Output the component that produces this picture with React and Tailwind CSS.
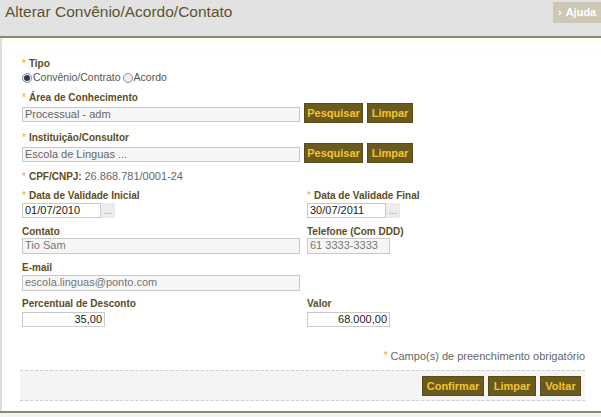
import React from "react";

const Star = () => <span className="text-[#e5a93a] font-normal mr-[3px] text-[10px] align-top">*</span>;

function Label({ children, req, className = "" }) {
  return (
    <div className={"text-[10px] leading-[13px] font-bold text-[#5c4d1e] " + className}>
      {req && <Star />}
      {children}
    </div>
  );
}

function Btn({ children, w }) {
  return (
    <div
      className={"h-[20px] bg-[#6b5a1e] border border-[#5a4a14] text-[#f2c42a] text-[11px] font-bold leading-[18px] text-center " + w}
    >
      {children}
    </div>
  );
}

function Field({ children, className = "" }) {
  return (
    <div className={"h-[15px] border border-[#c9c9c9] text-[11px] leading-[13px] px-[2px] overflow-hidden whitespace-nowrap " + className}>
      {children}
    </div>
  );
}

function Radio({ checked }) {
  return (
    <span className="inline-flex w-[10px] h-[10px] rounded-full border border-[#8a8f99] bg-[#f0f0f0] items-center justify-center mr-[1px]">
      {checked && <span className="w-[6px] h-[6px] rounded-full bg-[#2c3a55]" />}
    </span>
  );
}

export default function App() {
  return (
    <div className="w-[601px] h-[417px] bg-white flex flex-col overflow-hidden" style={{ fontFamily: '"Liberation Sans", Arial, sans-serif' }}>
      <div className="h-[36px] bg-[#e2e2e2] flex justify-between items-start shrink-0">
        <div className="pl-[5px] pt-[3px] text-[15.5px] leading-[18px] text-[#5f5233]">Alterar Convênio/Acordo/Contato</div>
        <div className="mt-[2px] h-[21px] w-[48px] bg-[#cdc8b3] text-white text-[11px] font-bold leading-[21px] pl-[5px]">
          <span className="mr-[4px]">›</span>Ajuda
        </div>
      </div>
      <div className="h-[2px] bg-[#8b8a6a] shrink-0" />
      <div className="flex-1 border-l-2 border-[#dedede] flex flex-col pl-[20px] pt-[19px] bg-gradient-to-b from-[#fffef3] via-white to-white via-[4%]">
        <Label req>Tipo</Label>
        <div className="flex items-center text-[10.5px] leading-[13px] text-[#555] mt-[1px]">
          <Radio checked />
          <span>Convênio/Contrato</span>
          <span className="w-[2px]" />
          <Radio />
          <span>Acordo</span>
        </div>

        <Label req className="mt-[7px]">Área de Conhecimento</Label>
        <div className="flex items-end gap-[4px] mt-[-1px]">
          <Field className="w-[278px] bg-[#f6f6f6] text-[#666] mb-[1px]">Processual - adm</Field>
          <Btn w="w-[59px]">Pesquisar</Btn>
          <Btn w="w-[46px]">Limpar</Btn>
        </div>

        <Label req className="mt-[8px]">Instituição/Consultor</Label>
        <div className="flex items-end gap-[4px] mt-[-1px]">
          <Field className="w-[278px] bg-[#f6f6f6] text-[#666] mb-[1px]">Escola de Linguas ...</Field>
          <Btn w="w-[59px]">Pesquisar</Btn>
          <Btn w="w-[46px]">Limpar</Btn>
        </div>

        <Label req className="mt-[7px]">
          CPF/CNPJ: <span className="font-normal text-[11px] text-[#666]">26.868.781/0001-24</span>
        </Label>

        <div className="grid grid-cols-[285px_1fr] mt-[6px]">
          <div>
            <Label req>Data de Validade Inicial</Label>
            <div className="flex mt-[1px]">
              <Field className="w-[79px] bg-white text-[#222]">01/07/2010</Field>
              <div className="w-[14px] h-[15px] bg-[#ececec] text-[#999] text-[10px] leading-[15px] text-center">...</div>
            </div>
          </div>
          <div>
            <Label req>Data de Validade Final</Label>
            <div className="flex mt-[1px]">
              <Field className="w-[79px] bg-white text-[#222]">30/07/2011</Field>
              <div className="w-[14px] h-[15px] bg-[#ececec] text-[#999] text-[10px] leading-[15px] text-center">...</div>
            </div>
          </div>
        </div>

        <div className="grid grid-cols-[285px_1fr] mt-[7px]">
          <div>
            <Label>Contato</Label>
            <Field className="w-[278px] h-[16px] bg-[#f6f6f6] text-[#777] mt-[0px]">Tio Sam</Field>
          </div>
          <div>
            <Label>Telefone (Com DDD)</Label>
            <Field className="w-[83px] h-[16px] bg-[#f6f6f6] text-[#777]">61 3333-3333</Field>
          </div>
        </div>

        <Label className="mt-[7px]">E-mail</Label>
        <Field className="w-[278px] h-[16px] bg-[#f6f6f6] text-[#777] mt-[1px]">escola.linguas@ponto.com</Field>

        <div className="grid grid-cols-[285px_1fr] mt-[6px]">
          <div>
            <Label>Percentual de Desconto</Label>
            <Field className="w-[83px] bg-white text-[#222] text-right mt-[2px]">35,00</Field>
          </div>
          <div>
            <Label>Valor</Label>
            <Field className="w-[83px] bg-white text-[#222] text-right mt-[2px]">68.000,00</Field>
          </div>
        </div>

        <div className="text-right pr-[16px] text-[11px] leading-[14px] text-[#666] mt-[22px]">
          <Star />Campo(s) de preenchimento obrigatório
        </div>

        <div className="mt-[7px] mr-[16px] ml-[-2px] h-[31px] bg-[#f4f4f4] border-y border-dashed border-[#cfcfcf] flex items-center justify-end gap-[4px] pr-[4px]">
          <Btn w="w-[62px]">Confirmar</Btn>
          <Btn w="w-[48px]">Limpar</Btn>
          <Btn w="w-[41px]">Voltar</Btn>
        </div>
        <div className="flex-1" />
      </div>
      <div className="h-[2px] bg-[#8b8a6a] shrink-0" />
      <div className="h-[4px] bg-[#f3f3f3] shrink-0" />
    </div>
  );
}
